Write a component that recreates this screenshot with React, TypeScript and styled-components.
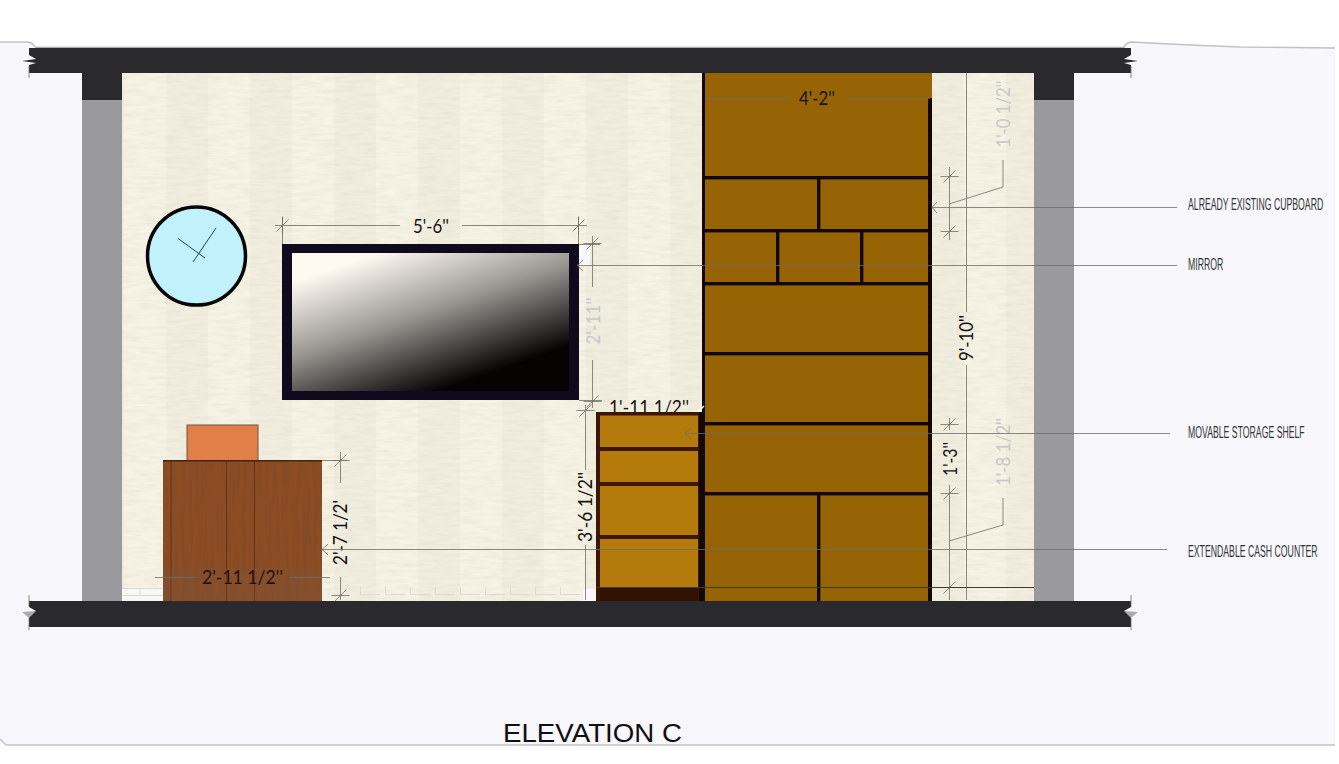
import React from 'react'
import styled, { createGlobalStyle } from 'styled-components'

const GlobalStyle = createGlobalStyle`
  html, body {
    margin: 0;
    padding: 0;
    background: #fff;
    overflow: hidden;
  }
`

const Page = styled.main`
  width: 1339px;
  height: 764px;
  background: #fff;
`

const Drawing = styled.svg`
  display: block;
  width: 1339px;
  height: 764px;
`

const Beam = styled.path`
  fill: #2a292e;
`

const PaperFill = styled.path`
  fill: #f7f7fc;
`

const PaperEdge = styled.path`
  fill: none;
  stroke: #c2c2c4;
  stroke-width: 1.4;
`

const BeamHighlight = styled.line`
  stroke: #a9a9ab;
  stroke-width: 1.5;
`

const Post = styled.rect<{ $dark?: boolean }>`
  fill: ${props => (props.$dark ? '#2a292e' : '#9a999e')};
`

const Shelf = styled.rect`
  fill: #120800;
`

const CabinetBar = styled.rect`
  fill: #3b1703;
`

const Line = styled.path<{ $strong?: boolean }>`
  fill: none;
  stroke: ${props => (props.$strong ? '#3d3a30' : '#6f6e66')};
  stroke-width: ${props => (props.$strong ? 1 : 0.8)};
`

const SkirtingLine = styled.path`
  fill: none;
  stroke: #dcdbd2;
  stroke-width: 1;
`

const Dim = styled.text<{ $faint?: boolean; $size?: number }>`
  font-family: 'Lato', 'Open Sans', sans-serif;
  font-size: ${props => props.$size ?? 20}px;
  font-weight: 400;
  fill: ${props => (props.$faint ? '#c7c8c8' : '#14110f')};
  text-anchor: middle;
`

const Callout = styled.text`
  font-family: 'Liberation Sans', Arial, sans-serif;
  font-size: 17px;
  fill: #333336;
`

const Title = styled.text`
  font-family: 'Liberation Sans', Arial, sans-serif;
  font-size: 25px;
  fill: #101012;
`

const Tick: React.FC<{ x: number; y: number; v?: boolean }> = ({ x, y, v }) => (
  <Line
    d={
      v
        ? `M${x - 9} ${y}H${x + 9}M${x - 6} ${y + 6}L${x + 6} ${y - 6}`
        : `M${x} ${y - 9}V${y + 9}M${x - 6} ${y + 6}L${x + 6} ${y - 6}`
    }
  />
)

const Vertical: React.FC<{ x: number; y: number; faint?: boolean; size?: number; length?: number; children: string }> = ({
  x,
  y,
  faint,
  size,
  length,
  children
}) => (
  <Dim
    $faint={faint}
    $size={size}
    transform={`rotate(-90 ${x} ${y})`}
    x={x}
    y={y}
    textLength={length}
    lengthAdjust="spacingAndGlyphs"
  >
    {children}
  </Dim>
)

const shelves = [176, 229, 282, 352, 422, 492]
const dividers = [
  { x: 817, y: 179, h: 50 },
  { x: 776, y: 232, h: 50 },
  { x: 860, y: 232, h: 50 },
  { x: 817, y: 495, h: 106 }
]
const callouts = [
  { label: 'ALREADY EXISTING CUPBOARD', y: 210 },
  { label: 'MIRROR', y: 270 },
  { label: 'MOVABLE STORAGE SHELF', y: 438 },
  { label: 'EXTENDABLE CASH COUNTER', y: 557 }
]
// the labels are a condensed face in the drawing, so the glyphs get squeezed
const CALLOUT_SQUEEZE = 0.512
const skirtingSteps = [360, 385, 410, 435, 460, 485, 510, 535, 560, 585]

const App: React.FC = () => (
  <Page>
    <GlobalStyle />
    <Drawing viewBox="0 0 1339 764" xmlns="http://www.w3.org/2000/svg">
      <defs>
        <pattern id="stripes" x="124" y="0" width="84" height="20" patternUnits="userSpaceOnUse">
          <rect width="84" height="20" fill="#f2eedf" />
          <rect width="42" height="20" fill="#f6f3e5" />
        </pattern>
        <filter id="paper" x="0" y="0" width="100%" height="100%">
          <feTurbulence type="fractalNoise" baseFrequency="0.05 0.3" numOctaves="3" seed="4" />
          <feColorMatrix values="0 0 0 0 0.6  0 0 0 0 0.57  0 0 0 0 0.45  0 0 0 0.4 -0.14" />
        </filter>
        <filter id="grain" x="0" y="0" width="100%" height="100%">
          <feTurbulence type="fractalNoise" baseFrequency="0.28 0.018" numOctaves="3" seed="9" />
          <feColorMatrix values="0 0 0 0 0.22  0 0 0 0 0.07  0 0 0 0 0.02  0 0 0 2 -0.72" />
        </filter>
        <linearGradient id="mirror" gradientUnits="userSpaceOnUse" x1="398" y1="229" x2="452" y2="386">
          <stop offset="0.1" stopColor="#fdf9f1" />
          <stop offset="0.52" stopColor="#9b9893" />
          <stop offset="1" stopColor="#050403" />
        </linearGradient>
      </defs>

      {/* sheet */}
      <PaperFill d="M0 42 L28 42 Q33 43 36 48 L1124 48 Q1125 43 1131 42 L1190 45 L1240 47 L1335 48 L1335 745 L6 745 L0 739 Z" />
      <PaperEdge d="M0 42 L28 42 Q33 43 36 48" />
      <PaperEdge d="M1124 48 Q1125 43 1131 42 L1190 45 L1240 47 L1335 48" />
      <PaperEdge d="M0 739 L6 745 H1335" />

      {/* wall */}
      <rect x="122" y="73" width="912" height="528" fill="url(#stripes)" />
      <rect x="122" y="73" width="912" height="528" filter="url(#paper)" />
      <Post x={82} y={73} width={40} height={27} $dark />
      <Post x={1034} y={73} width={40} height={27} $dark />
      <Post x={82} y={100} width={40} height={501} />
      <Post x={1034} y={100} width={40} height={501} />

      {/* skirting */}
      <rect x="122" y="589" width="41" height="12" fill="#f7f7f6" />
      <SkirtingLine d="M122 588.5H163M140 589V595.5H163M122 595.5H140" />
      {skirtingSteps.map(x => (
        <SkirtingLine key={x} d={`M${x + 0.5} 587V594.5H${x + 20}`} />
      ))}
      <rect x="583" y="589" width="13" height="12" fill="#f7f7fc" />

      {/* beams */}
      <BeamHighlight x1={36} y1={47.5} x2={1124} y2={47.5} />
      <Beam d="M29 48 V55 L36 59 L22 61 L36 63 L29 65 V73 H1131 V65 L1124 63 L1138 61 L1124 59 L1131 55 V48 Z" />
      <Beam d="M29 601 H1131 V607 L1124 611 L1131 613 V627 H29 V613 L36 611 L29 607 Z" />
      <path d="M22 612 L36 611 L29 618 Z" fill="#aaaab0" />
      <path d="M1138 612 L1124 611 L1131 618 Z" fill="#aaaab0" />
      <Line d="M29 595V607M29 618V630M1131 595V607M1131 618V630M29 66V78M1131 66V78" />

      {/* clock */}
      <circle cx={196.5} cy={256} r={49} fill="#c1f1fb" stroke="#050505" strokeWidth={3.5} />
      <path d="M178 238.5L205 258M216 228L193 262" stroke="#1d4954" strokeWidth={1} fill="none" />

      {/* mirror */}
      <rect x="579" y="245" width="11" height="21" fill="#f7f7fc" />
      <rect x="282" y="244" width="297" height="156" fill="#0f0a1e" />
      <rect x="292" y="253" width="277" height="138" fill="url(#mirror)" />
      <Line d="M275 225.5H400M462 225.5H587M282.5 217V244M578.5 217V244M579 244.5H600M579 400.5H602" />
      <Tick x={282.5} y={225.5} />
      <Tick x={578.5} y={225.5} />
      <Dim x={431} y={233} textLength={36} lengthAdjust="spacingAndGlyphs">5'-6''</Dim>
      <Line d="M592.5 236V287M592.5 360V408M585.5 405V470M585.5 545V600" />
      <Tick x={592.5} y={243.5} v />
      <Tick x={592.5} y={401.5} v />
      <Tick x={585.5} y={410.5} v />
      <Vertical x={600} y={321} faint length={47}>2'-11''</Vertical>

      {/* cupboard */}
      <rect x="702" y="73" width="230" height="528" fill="#966405" />
      <Shelf x={702} y={73} width={3} height={528} />
      <Shelf x={928} y={98} width={4} height={503} />
      {shelves.map(y => (
        <Shelf key={y} x={702} y={y} width={230} height={3.4} />
      ))}
      {dividers.map(d => (
        <Shelf key={`${d.x}-${d.y}`} x={d.x} y={d.y} width={3.4} height={d.h} />
      ))}
      <Line d="M705 98.5H790M848 98.5H930" />
      <Dim x={817} y={105} textLength={36} lengthAdjust="spacingAndGlyphs">4'-2''</Dim>

      {/* dimension text sits behind the cabinet */}
      <Dim x={649} y={414} textLength={80} lengthAdjust="spacingAndGlyphs">
        1'-11 1/2''
      </Dim>
      <path d="M698 412L704 406" stroke="#fff" strokeWidth={1.5} />

      {/* movable cabinet */}
      <rect x="596" y="412" width="106" height="189" fill="#3b1703" />
      <rect x="600" y="415.5" width="98" height="172" fill="#b57a0c" />
      <CabinetBar x={600} y={447} width={98} height={4} />
      <CabinetBar x={600} y={482} width={98} height={4} />
      <CabinetBar x={600} y={535} width={98} height={4} />
      <rect x="600" y="588" width="98" height="13" fill="#321200" />
      <Shelf x={699} y={412} width={6} height={189} />

      {/* desk */}
      <rect x="187" y="425" width="71" height="36" fill="#e07f48" stroke="#75523c" strokeWidth={1} />
      <rect x="163" y="460" width="159" height="141" fill="#8d4c22" />
      <rect x="163" y="460" width="159" height="141" filter="url(#grain)" />
      <rect x="163" y="460" width="159" height="1.5" fill="#452313" />
      <path d="M226.5 461V601M254.5 461V601M171 461V601" stroke="#5a2c14" strokeWidth={0.8} fill="none" />
      <rect x="163" y="568" width="159" height="33" fill="#6d6560" opacity={0.16} />
      <Line d="M155 577.5H195M290 577.5H330M322 460.5H347M340.5 452V483M340.5 577V600" />
      <Tick x={340.5} y={460.5} v />
      <Tick x={340.5} y={595.5} v />
      <Dim x={242.5} y={584} textLength={81} lengthAdjust="spacingAndGlyphs" style={{ fill: '#2a0f08' }}>
        2'-11 1/2''
      </Dim>
      <Vertical x={347} y={532.5} length={65}>2'-7 1/2'</Vertical>
      <Vertical x={592} y={507} length={70}>3'-6 1/2''</Vertical>

      {/* right side dimensions */}
      <Line d="M966.5 73V312M966.5 365V600" />
      <Line d="M949.5 167V240M949.5 418V430M949.5 485V600" />
      <Tick x={949.5} y={176.5} v />
      <Tick x={949.5} y={231.5} v />
      <Tick x={949.5} y={424.5} v />
      <Tick x={949.5} y={493.5} v />
      <Tick x={949.5} y={587.5} v />
      <Line d="M949 204L1003 187V160M949 541L1003 525V498" />
      <Vertical x={973} y={338} length={46}>9'-10''</Vertical>
      <Vertical x={957} y={459} length={34}>1'-3''</Vertical>
      <Vertical x={1010} y={114} faint length={67}>1'-0 1/2''</Vertical>
      <Vertical x={1010} y={452} faint length={68}>1'-8 1/2''</Vertical>

      {/* leaders */}
      <Line d="M932 207.5H1177M937 202L932 207.5L937 213" />
      <Line d="M577 265.5H1177M583 260L577 265.5L583 271" />
      <Line d="M685 433.5H1170M691 428L685 433.5L691 439" />
      <Line d="M322 549.5H1167M328 544L322 549.5L328 555" />
      <Line $strong d="M596 587.5H1034" />

      {callouts.map(c => (
        <Callout key={c.label} transform={`translate(1188 ${c.y}) scale(${CALLOUT_SQUEEZE} 1)`}>
          {c.label}
        </Callout>
      ))}

      <Title x={503} y={742} textLength={179} lengthAdjust="spacingAndGlyphs">
        ELEVATION C
      </Title>
    </Drawing>
  </Page>
)

export default App
